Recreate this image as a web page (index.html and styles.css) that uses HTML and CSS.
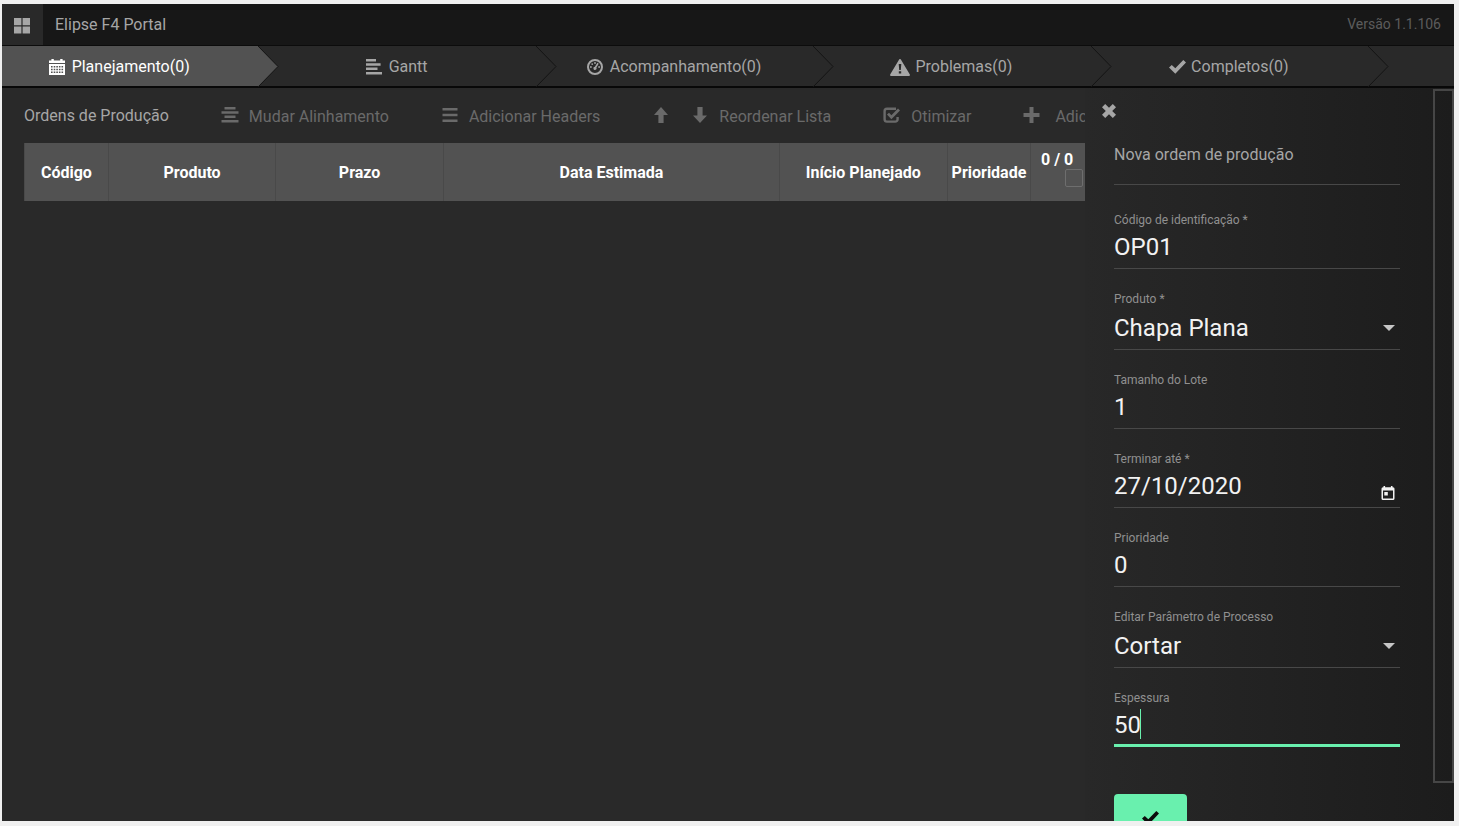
FILE: index.html
```html
<!DOCTYPE html>
<html lang="pt-BR">
<head>
<meta charset="utf-8">
<title>Elipse F4 Portal</title>
<link rel="stylesheet" href="styles.css">
</head>
<body>
<div class="app">
  <header class="topbar">
    <button class="apps" type="button" aria-label="Menu">
      <svg width="16" height="16" viewBox="0 0 16 16" fill="currentColor"><path d="M0 0h7.4v7.2H0zM8.6 0H16v7.2H8.6zM0 8.6h7.4V15.5H0zM8.6 8.6H16v6.9H8.6z"/></svg>
    </button>
    <span class="brand">Elipse F4 Portal</span>
    <span class="version">Versão 1.1.106</span>
  </header>

  <nav class="tabs">
    <a class="tab active" href="#planejamento">
      <svg width="16" height="16" viewBox="0 0 16 16" fill="currentColor"><path fill-rule="evenodd" d="M0 1.5h2.4V0h2.4v1.5h6.4V0h2.4v1.5H16V4H0zM0 5h16v11H0zM2 7v1.4h1.6V7zM4.7 7v1.4h1.6V7zM7.3 7v1.4h1.6V7zM9.9 7v1.4h1.6V7zM12.5 7v1.4h1.6V7zM2 9.8v1.4h1.6V9.8zM4.7 9.8v1.4h1.6V9.8zM7.3 9.8v1.4h1.6V9.8zM9.9 9.8v1.4h1.6V9.8zM12.5 9.8v1.4h1.6V9.8zM2 12.6V14h1.6v-1.4zM4.7 12.6V14h1.6v-1.4zM7.3 12.6V14h1.6v-1.4zM9.9 12.6V14h1.6v-1.4zM12.5 12.6V14h1.6v-1.4z"/></svg>
      <span>Planejamento(0)</span>
      <svg class="arrow" viewBox="0 0 21 41"><path d="M0 0 20 20.5 0 41"/></svg>
    </a>
    <a class="tab" href="#gantt">
      <svg width="16" height="16" viewBox="0 0 16 16" fill="currentColor"><path d="M0 0h10v2.6H0zM0 4.3h14.6v2.5H0zM0 8.6h11.5v2.5H0zM0 12.9h16v2.6H0z"/></svg>
      <span>Gantt</span>
      <svg class="arrow" viewBox="0 0 21 41"><path d="M0 0 20 20.5 0 41"/></svg>
    </a>
    <a class="tab" href="#acompanhamento">
      <svg width="16" height="16" viewBox="0 0 16 16" fill="currentColor"><circle cx="8" cy="8" r="7" fill="none" stroke="currentColor" stroke-width="2"/><circle cx="3.9" cy="8" r=".9"/><circle cx="5.2" cy="5.1" r=".9"/><circle cx="8" cy="4" r=".9"/><circle cx="12.1" cy="8" r=".9"/><path d="m10.4 3.8 1.3.9-2.3 3.8a1.6 1.6 0 1 1-1.5-.8z"/></svg>
      <span>Acompanhamento(0)</span>
      <svg class="arrow" viewBox="0 0 21 41"><path d="M0 0 20 20.5 0 41"/></svg>
    </a>
    <a class="tab tight" href="#problemas">
      <svg width="20" height="17" viewBox="0 0 20 17" fill="currentColor"><path fill-rule="evenodd" d="M9 .7a1.2 1.2 0 0 1 2 0l8.7 14.6A1.1 1.1 0 0 1 18.8 17H1.2a1.1 1.1 0 0 1-.9-1.7zM8.7 5l.5 6h1.6l.5-6zM8.8 12.2v2.3h2.4v-2.3z"/></svg>
      <span>Problemas(0)</span>
      <svg class="arrow" viewBox="0 0 21 41"><path d="M0 0 20 20.5 0 41"/></svg>
    </a>
    <a class="tab tight" href="#completos">
      <svg width="17" height="14" viewBox="0 0 17 14" fill="currentColor"><path d="M0 7.6 2.8 4.9 6.3 8.3 14.3 0 17 2.6 6.3 13.8z"/></svg>
      <span>Completos(0)</span>
      <svg class="arrow" viewBox="0 0 21 41"><path d="M0 0 20 20.5 0 41"/></svg>
    </a>
  </nav>

  <div class="content">
    <main class="orders">
      <div class="toolbar">
        <h1 class="title">Ordens de Produção</h1>
        <button class="tool" type="button">
          <svg width="18" height="16" viewBox="0 0 18 16" fill="currentColor"><path d="M3.5 0h11v2.6h-11zM.5 4.3h17v2.5H.5zM3.5 8.6h11v2.5h-11zM.5 12.9h17v2.6H.5z"/></svg>
          <span>Mudar Alinhamento</span>
        </button>
        <button class="tool" type="button">
          <svg width="18" height="16" viewBox="0 0 18 16" fill="currentColor"><path d="M1.5 1h15v2.4h-15zM1.5 6.8h15v2.4h-15zM1.5 12.6h15v2.4h-15z"/></svg>
          <span>Adicionar Headers</span>
        </button>
        <div class="sort">
          <button class="tool" type="button" aria-label="Subir">
            <svg width="18" height="16" viewBox="0 0 18 16" fill="currentColor"><path d="M9 0l7 8h-4.400v8H6.400V8H2z"/></svg>
          </button>
          <button class="tool" type="button">
            <svg width="18" height="16" viewBox="0 0 18 16" fill="currentColor"><path d="M9 16l7-7.500h-4.400V0H6.400v8.500H2z"/></svg>
            <span>Reordenar Lista</span>
          </button>
        </div>
        <button class="tool" type="button">
          <svg width="18" height="16" viewBox="0 0 18 16" fill="none" stroke="currentColor"><path stroke-width="2.4" d="M13 1.800H4a2.400 2.400 0 0 0-2.400 2.400v8A2.400 2.400 0 0 0 4 14.600h8.200a2.400 2.400 0 0 0 2.400-2.400V10"/><path stroke-width="2.800" d="m5 6.600 3.400 3.600L16 2.500"/></svg>
          <span>Otimizar</span>
        </button>
        <button class="tool" type="button">
          <svg width="22" height="16" viewBox="0 0 22 16" fill="currentColor"><path d="M6.500 0h4v6h6v4h-6v6h-4v-6h-6V6h6z"/></svg>
          <span>Adicionar</span>
        </button>
      </div>
      <table class="grid">
        <colgroup><col class="c-small"><col class="c-mid"><col class="c-mid"><col class="c-wide"><col class="c-mid"><col class="c-small"><col></colgroup>
        <thead>
          <tr>
            <th>Código</th><th>Produto</th><th>Prazo</th><th>Data Estimada</th><th>Início Planejado</th><th>Prioridade</th>
            <th class="select-all"><label for="all">0 / 0</label><input id="all" type="checkbox"></th>
          </tr>
        </thead>
      </table>
    </main>

    <aside class="drawer">
      <form class="form">
        <button class="close" type="button" aria-label="Fechar">
          <svg width="14" height="14" viewBox="0 0 14 14" fill="currentColor"><path d="M3.200 0 7 3.800 10.800 0 14 3.200 10.200 7 14 10.800 10.800 14 7 10.200 3.200 14 0 10.800 3.800 7 0 3.200z"/></svg>
        </button>
        <h2 class="form-title">Nova ordem de produção</h2>
        <div class="fields">
          <div class="field"><label for="codigo">Código de identificação *</label><input id="codigo" type="text" value="OP01"></div>
          <div class="field"><label for="produto">Produto *</label><select id="produto"><option>Chapa Plana</option></select>
            <svg class="caret-down" width="12" height="6" viewBox="0 0 12 6" fill="currentColor"><path d="M0 0h12L6 6z"/></svg></div>
          <div class="field"><label for="lote">Tamanho do Lote</label><input id="lote" type="number" value="1"></div>
          <div class="field"><label for="prazo">Terminar até *</label><input id="prazo" type="text" value="27/10/2020">
            <button class="picker" type="button" aria-label="Abrir calendário">
              <svg width="14" height="14" viewBox="0 0 14 14" fill="currentColor"><path fill-rule="evenodd" d="M2.500 0h1.600v1.300h5.800V0h1.600v1.300h.500A1.500 1.500 0 0 1 13.500 2.800v9.700A1.500 1.500 0 0 1 12 14H2A1.500 1.500 0 0 1 .500 12.500V2.800A1.500 1.500 0 0 1 2 1.300h.500zM2 4.500v8h10v-8zM3.300 6h3.500v3.400H3.300z"/></svg>
            </button></div>
          <div class="field"><label for="prioridade">Prioridade</label><input id="prioridade" type="number" value="0"></div>
          <div class="field"><label for="parametro">Editar Parâmetro de Processo</label><select id="parametro"><option>Cortar</option></select>
            <svg class="caret-down" width="12" height="6" viewBox="0 0 12 6" fill="currentColor"><path d="M0 0h12L6 6z"/></svg></div>
          <div class="field editing"><label for="espessura">Espessura</label><input id="espessura" type="number" value="50"><span class="cursor"></span></div>
        </div>
        <button class="confirm" type="submit" aria-label="Confirmar">
          <svg width="17" height="14" viewBox="0 0 17 14" fill="currentColor"><path d="M0 7.600 2.800 4.900 6.300 8.300 14.300 0 17 2.600 6.300 13.800z"/></svg>
        </button>
      </form>
      <div class="track"></div>
    </aside>
  </div>
</div>
</body>
</html>
```
FILE: styles.css
```css
* {
  box-sizing: border-box;
}

body {
  margin: 0;
  padding: 4px 5px 5px 2px;
  height: 100vh;
  background: #f0f0f0;
  font: 16px/20px Roboto, sans-serif;
  color: #a6a6a6;
}

button,
input,
select {
  margin: 0;
  padding: 0;
  border: 0;
  border-radius: 0;
  background: none;
  color: inherit;
  font: inherit;
  appearance: none;
  outline: none;
}

svg {
  display: block;
  flex: none;
}

.app {
  display: flex;
  flex-direction: column;
  height: 100%;
  overflow: hidden;
  background: #292929;
}

.topbar {
  display: flex;
  align-items: center;
  height: 42px;
  padding-right: 13px;
  background: #171717;
  border-bottom: 1px solid #0c0c0c;
}

.apps {
  display: flex;
  align-items: center;
  justify-content: center;
  width: 41px;
  height: 41px;
  background: #292929;
  padding: 3px 1px 0 0;
}

.brand {
  flex: 1;
  margin-left: 12px;
}

.version {
  padding-bottom: 2px;
  font-size: 14px;
  color: #5c5c5c;
}

.tabs {
  display: flex;
  height: 42px;
  padding-right: 65px;
  border-bottom: 2px solid #080808;
}

.tab {
  position: relative;
  flex: 1;
  display: flex;
  align-items: center;
  justify-content: center;
  gap: 7px;
  padding: 2px 43px 0 0;
  color: #a6a6a6;
  text-decoration: none;
}

.tab.tight {
  gap: 5px;
}

.tab.active {
  color: #fff;
  background: linear-gradient(#525252, #525252) no-repeat 0 0 / calc(100% - 20px) 100%;
}

.arrow {
  position: absolute;
  top: 0;
  right: 0;
  width: 21px;
  height: 41px;
  fill: none;
  stroke: #141414;
  stroke-width: 1;
}

.active .arrow {
  fill: #525252;
}

.content {
  flex: 1;
  display: flex;
  min-height: 0;
}

.orders {
  flex: 1;
  min-width: 0;
  overflow: hidden;
  padding-left: 22px;
}

.toolbar {
  display: flex;
  align-items: center;
  gap: 52px;
  height: 55px;
  white-space: nowrap;
}

.title {
  margin: 0;
  font-size: 16px;
  font-weight: 400;
}

.tool {
  display: flex;
  align-items: center;
  gap: 10px;
  padding-top: 2px;
  color: #6a6a6a;
}

.tool svg {
  margin-bottom: 4px;
}

.sort {
  display: flex;
  gap: 21px;
}

.grid {
  width: 100%;
  height: 58px;
  table-layout: fixed;
  border-collapse: collapse;
  background: #525252;
  color: #fff;
}

.grid th {
  padding: 1px 0 0;
  border-left: 1px solid #494949;
  font-weight: 700;
  white-space: nowrap;
}

.c-small {
  width: 7.9%;
}

.c-mid {
  width: 15.8%;
}

.c-wide {
  width: 31.7%;
}

.grid .select-all {
  vertical-align: top;
  padding: 8px 2px 0 0;
}

.select-all label {
  display: block;
  line-height: 18px;
}

.select-all input {
  display: block;
  width: 18px;
  height: 18px;
  margin-left: auto;
  border: 1px solid #6e6e6e;
  border-radius: 2px;
}

.drawer {
  display: flex;
  flex: 0 0 369px;
  overflow: hidden;
  background: linear-gradient(90deg, #282828, #1c1c1c);
}

.form {
  flex: 1;
  padding: 16px 33px 0 29px;
}

.close {
  display: block;
  margin-left: -12px;
  color: #a6a6a6;
}

.form-title {
  margin: 27px 0 0;
  padding-bottom: 19px;
  border-bottom: 1px solid #484848;
  font-size: 16px;
  font-weight: 400;
}

.fields {
  display: flex;
  flex-direction: column;
  gap: 21px;
  padding-top: 26px;
}

.field {
  position: relative;
}

.field label {
  display: block;
  padding-top: 1px;
  font-size: 12px;
  line-height: 16px;
  color: #909090;
}

.field input,
.field select {
  display: block;
  width: 100%;
  height: 41px;
  padding-bottom: 2px;
  border-bottom: 1px solid #484848;
  font-size: 24px;
  line-height: 32px;
  color: #f2f2f2;
}

.field input[type="number"] {
  appearance: textfield;
}

.field select {
  height: 43px;
  padding-bottom: 0;
}

.caret-down {
  position: absolute;
  right: 5px;
  bottom: 19px;
  color: #c6c6c6;
}

.picker {
  position: absolute;
  right: 5px;
  bottom: 8px;
  color: #f2f2f2;
}

.field.editing input {
  padding-bottom: 0;
  border-bottom: 3px solid #69f0ae;
}

.cursor {
  position: absolute;
  left: 26px;
  bottom: 8px;
  width: 1px;
  height: 30px;
  background: #69f0ae;
}

.confirm {
  display: flex;
  align-items: center;
  justify-content: center;
  width: 73px;
  height: 48px;
  margin-top: 47px;
  border-radius: 4px;
  background: #69f0ae;
  color: #0c0c0c;
}

.track {
  width: 21px;
  height: calc(100% - 39px);
  margin-top: 1px;
  border: 2px solid #464646;
}
```
